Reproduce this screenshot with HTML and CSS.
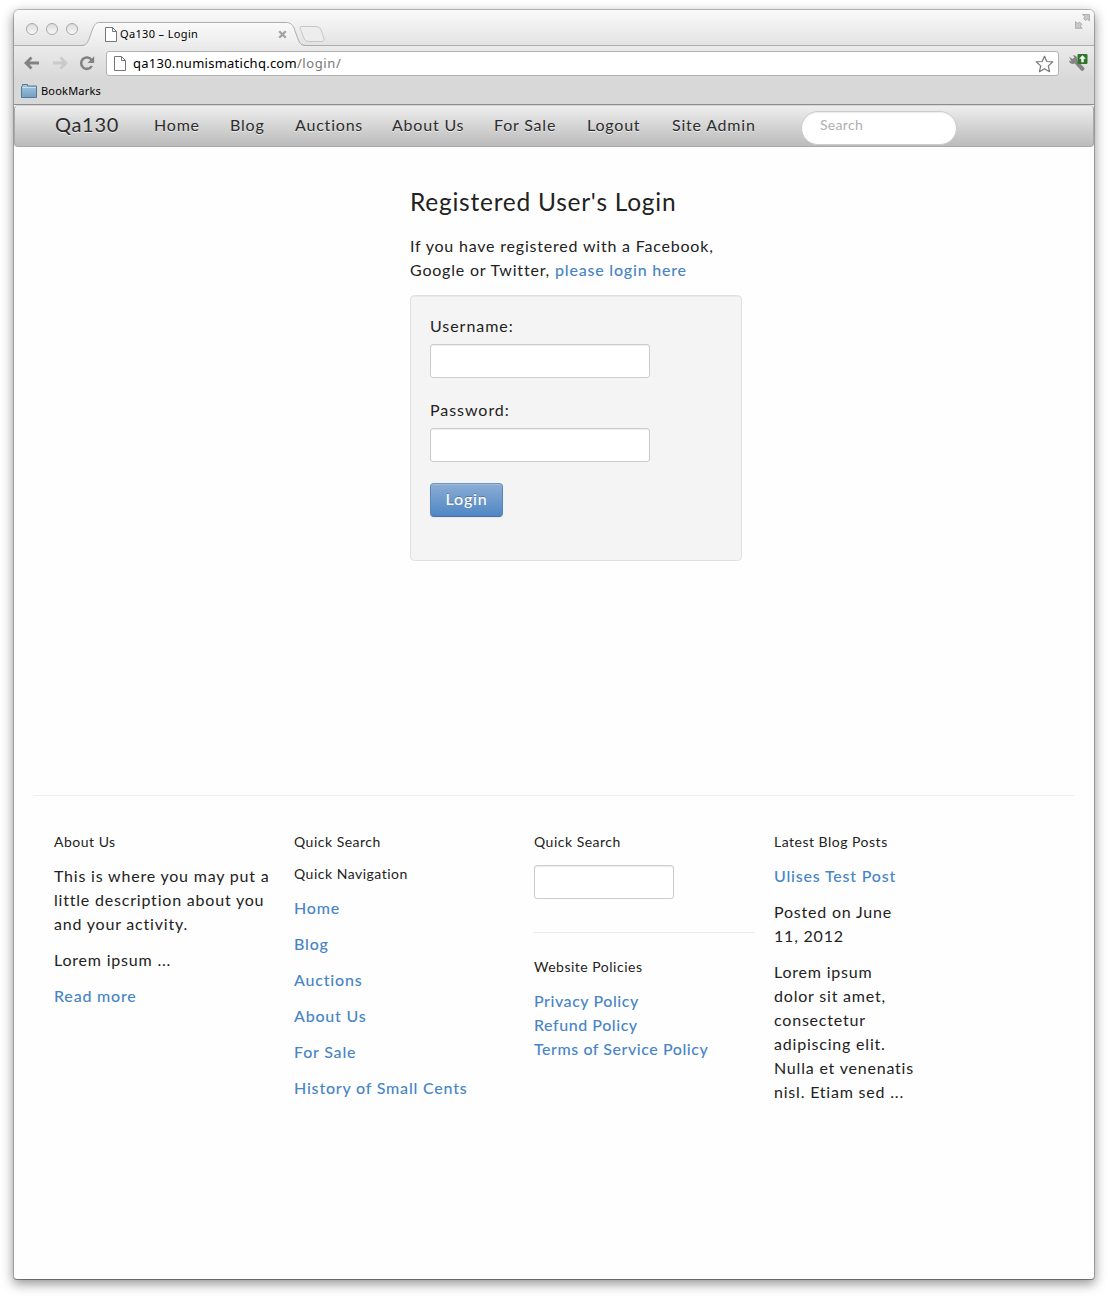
FILE: index.html
```html
<!DOCTYPE html>
<html lang="en">
<head>
<meta charset="utf-8">
<title>Qa130 – Login</title>
<link rel="stylesheet" href="styles.css">
</head>
<body>
<div class="window">
  <header class="titlebar">
    <div class="lights"><i></i><i></i><i></i></div>
    <div class="tab">
      <svg class="tab-shape" width="250" height="25" viewBox="0 0 250 25">
        <defs><linearGradient id="tabfill" x1="0" y1="0" x2="0" y2="1"><stop offset="0" stop-color="#fafafa"/><stop offset="1" stop-color="#ebebeb"/></linearGradient></defs>
        <path d="M0 25V24C7 24 7 21 9 17L13 6C15 2 16 .5 20 .5H206C210 .5 212 2 214 6L218 17C220 22 221 24 227 24V25Z" fill="url(#tabfill)"/>
        <path d="M0 23.500C7 23.500 7 21 9 17L13 6C15 2 16 .5 20 .5H206C210 .5 212 2 214 6L218 17C220 22 221 23.500 227 23.500" fill="none" stroke="#adadad"/>
        <path d="M222 4.500H236C239 4.500 240 6 241 8L243.500 15C244.500 18 244 19.500 241 19.500H229C226 19.500 224.500 18 223.500 15L220.500 7.500C219.500 5.500 220 4.500 222 4.500Z" fill="#ededed" stroke="#c6c6c6"/>
      </svg>
      <div class="tab-content">
        <svg width="12" height="15" viewBox="0 0 12 15"><path d="M.5.5H7.500L11.500 4.500V14.500H.5ZM7.500.5V4.500H11.500" fill="#fff" stroke="#777"/></svg>
        <span class="tab-title">Qa130 – Login</span>
        <svg width="9" height="9" viewBox="0 0 9 9"><path d="M1.200 1.200L7.800 7.800M7.800 1.200L1.200 7.800" stroke="#a2a2a2" stroke-width="2.200"/></svg>
      </div>
    </div>
    <svg class="expand" width="15" height="15" viewBox="0 0 15 15"><path d="M7.500.5H14.500V7L12.300 5L10.500 6.500L8.500 4.500L10 2.700ZM.5 7.500L2.700 9.500L4.500 8L6.800 10.300L5.200 12L7.200 14.300H.5Z" fill="#c9c9c9" stroke="#a5a5a5" stroke-width=".8"/></svg>
  </header>

  <div class="toolbar">
    <svg class="back" width="16" height="14" viewBox="0 0 16 14"><path d="M7.500 1.500L2 7L7.500 12.500M2.500 7H15" fill="none" stroke="#828282" stroke-width="2.800"/></svg>
    <svg class="forward" width="16" height="14" viewBox="0 0 16 14"><path d="M8.500 1.500L14 7L8.500 12.500M13.500 7H1" fill="none" stroke="#cacaca" stroke-width="2.800"/></svg>
    <svg class="reload" width="16" height="15" viewBox="0 0 16 15"><path d="M12.600 4A5.700 5.700 0 1 0 12.800 10" fill="none" stroke="#828282" stroke-width="2.500"/><path d="M15.200.3V7H8.500Z" fill="#828282"/></svg>
    <div class="omnibox">
      <svg width="12" height="15" viewBox="0 0 12 15"><path d="M.5.5H7.500L11.500 4.500V14.500H.5ZM7.500.5V4.500H11.500" fill="#fff" stroke="#777"/></svg>
      <span class="url">qa130.numismatichq.com<span class="path">/login/</span></span>
      <svg class="star" width="19" height="18" viewBox="0 0 19 18"><path d="M9.500 1.200L11.800 6.500L17.800 6.900L13.300 10.900L14.600 16.700L9.500 13.700L4.400 16.700L5.700 10.900L1.200 6.900L7.200 6.500Z" fill="#fff" stroke="#777" stroke-width="1.200" stroke-linejoin="round"/></svg>
    </div>
    <svg class="wrench" width="20" height="19" viewBox="0 0 20 19"><path d="M1.300 2.800L4.500 5L6.500 3.200L4.800 1.200C7.500.8 10 3 9.300 6.500L16 13.600C17.500 15.500 15 18 13 16.600L6.800 9.600C4 10.700.8 9 1 6.500L3.300 7.500" fill="#858585"/><rect x="9.500" y="0" width="10" height="10" rx="1" fill="#2d762a"/><path d="M14.500 1.300L17.800 4.800H15.700V8.300H13.300V4.800H11.200Z" fill="#fff"/></svg>
  </div>
  <div class="bookmarks">
    <svg width="16" height="14" viewBox="0 0 16 14"><defs><linearGradient id="folder" x1="0" y1="0" x2="0" y2="1"><stop offset="0" stop-color="#a8c8dd"/><stop offset="1" stop-color="#719fc4"/></linearGradient></defs><path d="M.5 13.500V2.500L1.500 2V.5H6.500V2H15.500V13.500Z" fill="url(#folder)" stroke="#53799a"/><path d="M1 3.500H15" stroke="#c7dce9"/></svg>
    <span>BookMarks</span>
  </div>

  <nav class="navbar">
    <a class="brand">Qa130</a>
    <a class="n-home">Home</a><a class="n-blog">Blog</a><a class="n-auctions">Auctions</a><a class="n-about">About Us</a><a class="n-sale">For Sale</a><a class="n-logout">Logout</a><a class="n-admin">Site Admin</a>
    <input class="nav-search" type="text" placeholder="Search">
  </nav>

  <main class="login">
    <h1>Registered User's Login</h1>
    <p>If you have registered with a Facebook,<br>Google or Twitter, <a>please login here</a></p>
    <form class="well">
      <label for="user">Username:</label>
      <input id="user" type="text">
      <label for="pass">Password:</label>
      <input id="pass" type="password">
      <button type="button">Login</button>
    </form>
  </main>

  <footer class="footer">
    <section>
      <h2>About Us</h2>
      <p>This is where you may put a<br>little description about you<br>and your activity.</p>
      <p>Lorem ipsum ...</p>
      <p><a>Read more</a></p>
    </section>
    <section>
      <h2>Quick Search</h2>
      <h2>Quick Navigation</h2>
      <p><a>Home</a></p><p><a>Blog</a></p><p><a>Auctions</a></p><p><a>About Us</a></p><p><a>For Sale</a></p><p><a>History of Small Cents</a></p>
    </section>
    <section>
      <h2>Quick Search</h2>
      <input type="text">
      <hr>
      <h2>Website Policies</h2>
      <p class="policies"><a>Privacy Policy</a><br><a>Refund Policy</a><br><a>Terms of Service Policy</a></p>
    </section>
    <section>
      <h2>Latest Blog Posts</h2>
      <p><a>Ulises Test Post</a></p>
      <p>Posted on June<br>11, 2012</p>
      <p>Lorem ipsum<br>dolor sit amet,<br>consectetur<br>adipiscing elit.<br>Nulla et venenatis<br>nisl. Etiam sed ...</p>
    </section>
  </footer>
</div>
</body>
</html>
```
FILE: styles.css
```css
* { box-sizing: border-box; }
body {
  margin: 0;
  height: 1299px;
  overflow: hidden;
  background: #fff;
  color: #222;
  font: 16px/24px Lato, "Noto Sans", sans-serif;
  letter-spacing: .8px;
}
svg { display: block; flex: none; }
.window {
  width: 1080px;
  height: 1269px;
  margin: 10px 0 0 14px;
  border-radius: 5px 5px 3px 3px;
  background: #fefefe;
  box-shadow: 0 0 0 1px rgba(0,0,0,.22), 0 1px 0 rgba(0,0,0,.2), 0 4px 12px 1px rgba(0,0,0,.42);
}

/* browser frame */
.titlebar {
  display: flex;
  height: 36px;
  border-bottom: 1px solid #adadad;
  border-radius: 5px 5px 0 0;
  background: linear-gradient(#fafafa, #e3e3e3);
}
.lights { display: flex; gap: 8px; padding: 13px 0 0 12px; }
.lights i {
  width: 12px;
  height: 12px;
  border: 1px solid #a9a9a9;
  border-radius: 50%;
  background: linear-gradient(#dcdcdc, #f8f8f8);
}
.tab { position: relative; width: 250px; margin: 12px 0 0 8px; height: 24px; }
.tab-shape { position: absolute; left: -6px; top: 0; }
.tab-content { position: relative; display: flex; align-items: center; height: 24px; padding-left: 19px; }
.tab-title {
  width: 158px;
  margin-left: 3px;
  color: #000;
  font: 11px/16px "Noto Sans", sans-serif;
  letter-spacing: .35px;
}
.expand { margin: 4px 4px 0 auto; }
.toolbar {
  display: flex;
  align-items: flex-start;
  height: 34px;
  padding-top: 5px;
  background: linear-gradient(#ebebeb, #d8d8d8);
}
.back { margin: 5px 0 0 10px; }
.forward { margin: 5px 0 0 12px; }
.reload { margin: 5px 0 0 11px; }
.omnibox {
  display: flex;
  align-items: center;
  width: 953px;
  height: 25px;
  margin-left: 11px;
  padding: 0 4px 0 7px;
  border: 1px solid #b2b2b2;
  border-radius: 3px;
  background: #fff;
}
.url {
  flex: 1;
  margin: -2px 0 0 7px;
  color: #000;
  font: 13px/20px "Noto Sans", sans-serif;
  letter-spacing: .25px;
}
.path { color: #777; letter-spacing: .6px; }
.wrench { margin: 3px 0 0 9px; }
.bookmarks {
  display: flex;
  align-items: center;
  gap: 4px;
  height: 25px;
  padding: 0 0 3px 7px;
  border-bottom: 1px solid #8c8c8c;
  background: #d8d8d8;
  color: #000;
  font: 11px/16px "Noto Sans", sans-serif;
  letter-spacing: .2px;
}

/* site */
a { color: #4785c6; font-weight: 500; }
.navbar {
  display: flex;
  align-items: flex-start;
  height: 42px;
  padding: 5px 0 0 41px;
  border: 1px solid #a9a9a9;
  border-top-color: #d5d5d5;
  border-radius: 4px;
  background: linear-gradient(#eee, #bbb);
}
.navbar a {
  color: #2d2d2d;
  font-weight: 400;
  line-height: 28px;
  text-shadow: 0 1px 0 rgba(255,255,255,.6);
  white-space: nowrap;
}
.navbar .brand { width: 99px; margin-left: -1px; font-size: 20px; line-height: 27px; letter-spacing: .7px; }
.n-home { width: 76px; }
.n-blog { width: 65px; }
.n-auctions { width: 97px; }
.n-about { width: 102px; }
.n-sale { width: 93px; }
.n-logout { width: 85px; }
.n-admin { width: 129px; }
input {
  display: block;
  height: 34px;
  padding: 4px 8px;
  border: 1px solid #ccc;
  border-radius: 3px;
  background: #fff;
  box-shadow: inset 0 1px 1px rgba(0,0,0,.075);
  font: inherit;
}
.nav-search {
  width: 156px;
  padding: 0 18px 7px;
  border-radius: 17px;
  font-size: 14px;
  letter-spacing: .3px;
}
.nav-search::placeholder { color: #b0b0b0; }
.login { width: 332px; height: 648px; margin-left: 396px; padding-top: 37px; white-space: nowrap; }
h1, h2, p { margin: 0; font-weight: 400; }
h1 { margin-bottom: 14px; font-size: 24.5px; line-height: 36px; letter-spacing: .75px; }
.well {
  height: 266px;
  margin-top: 13px;
  padding: 18px 19px;
  border: 1px solid #e1e1e1;
  border-radius: 4px;
  background: #f4f4f4;
  box-shadow: inset 0 1px 1px rgba(0,0,0,.05);
}
.well label { display: block; margin-bottom: 6px; letter-spacing: .95px; }
.well input { width: 220px; margin-bottom: 20px; }
button {
  display: block;
  width: 73px;
  height: 34px;
  margin-top: 21px;
  padding: 0 0 2px;
  border: 1px solid;
  border-color: #6d94be #5c87b7 #4673a6;
  border-radius: 4px;
  background: linear-gradient(#8badd5, #4f87c3);
  box-shadow: inset 0 1px 0 rgba(255,255,255,.2), 0 1px 2px rgba(0,0,0,.05);
  color: #fff;
  font: inherit;
  font-weight: 500;
  letter-spacing: .8px;
  text-shadow: 0 -1px 0 rgba(0,0,0,.25);
}
.well input + button { transform: none; }
.footer {
  display: grid;
  grid-template-columns: repeat(4, 220px);
  gap: 20px;
  margin: 0 20px;
  padding: 36px 20px 0;
  border-top: 1px solid #eee;
  white-space: nowrap;
}
h2 { margin-bottom: 12px; font-size: 14px; line-height: 20px; letter-spacing: .5px; }
.footer p { margin-bottom: 12px; }
.footer input { width: 140px; margin-top: 13px; }
.policies { letter-spacing: .55px; }
hr { height: 1px; margin: 33px 0 24px; border: 0; background: #eaeaea; }
```
